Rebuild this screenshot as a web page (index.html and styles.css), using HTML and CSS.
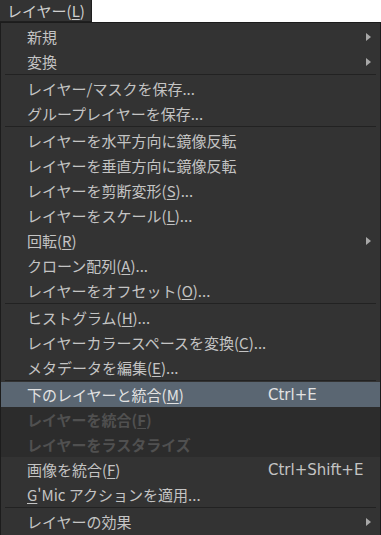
FILE: index.html
```html
<!DOCTYPE html>
<html lang="ja">
<head>
<meta charset="utf-8">
<link rel="stylesheet" href="styles.css">
</head>
<body>
<div class="bar"><div class="title">レイヤー(<u>L</u>)</div></div>
<div class="menu">
  <div class="item"><span class="label">新規</span><span class="arrow"></span></div>
  <div class="item"><span class="label">変換</span><span class="arrow"></span></div>
  <div class="sep"></div>
  <div class="item"><span class="label">レイヤー/マスクを保存...</span></div>
  <div class="item"><span class="label">グループレイヤーを保存...</span></div>
  <div class="sep"></div>
  <div class="item"><span class="label">レイヤーを水平方向に鏡像反転</span></div>
  <div class="item"><span class="label">レイヤーを垂直方向に鏡像反転</span></div>
  <div class="item"><span class="label">レイヤーを剪断変形(<u>S</u>)...</span></div>
  <div class="item"><span class="label">レイヤーをスケール(<u>L</u>)...</span></div>
  <div class="item"><span class="label">回転(<u>R</u>)</span><span class="arrow"></span></div>
  <div class="item"><span class="label">クローン配列(<u>A</u>)...</span></div>
  <div class="item"><span class="label">レイヤーをオフセット(<u>O</u>)...</span></div>
  <div class="sep"></div>
  <div class="item"><span class="label">ヒストグラム(<u>H</u>)...</span></div>
  <div class="item"><span class="label">レイヤーカラースペースを変換(<u>C</u>)...</span></div>
  <div class="item"><span class="label">メタデータを編集(<u>E</u>)...</span></div>
  <div class="sep"></div>
  <div class="item active"><span class="label">下のレイヤーと統合(<u>M</u>)</span><span class="key">Ctrl+E</span></div>
  <div class="item disabled"><span class="label">レイヤーを統合(<u>F</u>)</span></div>
  <div class="item disabled"><span class="label">レイヤーをラスタライズ</span></div>
  <div class="item"><span class="label">画像を統合(<u>F</u>)</span><span class="key">Ctrl+Shift+E</span></div>
  <div class="item"><span class="label"><u>G</u>'Mic アクションを適用...</span></div>
  <div class="sep"></div>
  <div class="item"><span class="label">レイヤーの効果</span><span class="arrow"></span></div>
</div>
</body>
</html>
```

FILE: styles.css
```css
html, body {
  margin: 0;
  padding: 0;
  background: #ffffff;
  font-family: "Noto Sans CJK JP", "DejaVu Sans", sans-serif;
  font-size: 15px;
}
u {
  text-decoration: underline;
  text-underline-offset: 2px;
}
.bar {
  height: 22px;
  display: flex;
}
.title {
  width: 92px;
  box-sizing: border-box;
  background: #333333;
  color: #cfcfcf;
  padding-left: 7px;
  line-height: 22px;
  border-right: 1px solid #1f1f1f;
  border-bottom: 1px solid #1f1f1f;
}
.menu {
  width: 381px;
  height: 513px;
  box-sizing: border-box;
  background: #333333;
  border: 1px solid #1c1c1c;
  border-bottom: none;
  padding-top: 1px;
  display: flex;
  flex-direction: column;
  overflow: hidden;
}
.item {
  height: 25px;
  flex: 0 0 25px;
  display: flex;
  align-items: center;
  padding-left: 26px;
  color: #c4c4c4;
  white-space: nowrap;
}
.label {
  flex: 0 0 241px;
  line-height: 25px;
}
.key {
  font-family: "DejaVu Sans", sans-serif;
  color: #c4c4c4;
}
.arrow {
  margin-left: auto;
  margin-right: 9px;
  width: 0;
  height: 0;
  border-left: 5px solid #a8a8a8;
  border-top: 4px solid transparent;
  border-bottom: 4px solid transparent;
}
.sep {
  flex: 0 0 2px;
  margin: 0 4px 0 4px;
  border-top: 1px solid #222222;
  box-sizing: border-box;
}
.active {
  background: #5a6672;
  color: #e2e2e2;
}
.active .key {
  color: #e2e2e2;
}
.disabled {
  background: #2c2c2c;
  color: #505050;
  font-weight: bold;
}
```
